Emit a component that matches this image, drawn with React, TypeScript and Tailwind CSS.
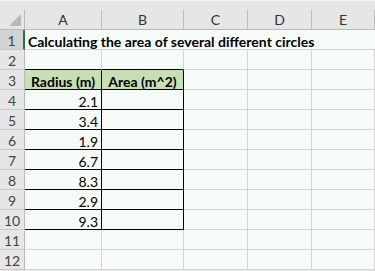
import React from 'react';

const COLS = ['A', 'B', 'C', 'D', 'E'];
const RADII = ['2.1', '3.4', '1.9', '6.7', '8.3', '2.9', '9.3'];

const grid = 'grid grid-cols-[25px_77px_82px_64px_64px_63px]';
const cellBase = 'h-[20px] border-r border-b text-[14px] leading-[19px] pt-[2px] whitespace-nowrap';

function RowHeader({ n, active }: { n: number; active?: boolean }) {
  return (
    <div
      className={`h-[20px] border-b border-b-[#c9c9c9] text-center text-[14px] leading-[20px] pt-px ${
        active
          ? 'bg-[#d2d2d2] text-[#2f4f2f] border-r-2 border-r-[#217346]'
          : 'bg-[#e6e6e6] text-[#444] border-r border-r-[#b9b9b9]'
      }`}
    >
      {n}
    </div>
  );
}

function Cell({
  children,
  black,
  blackBottom,
  fill,
  className = '',
}: {
  children?: React.ReactNode;
  black?: boolean;
  blackBottom?: boolean;
  fill?: boolean;
  className?: string;
}) {
  return (
    <div
      className={`${cellBase} ${black ? 'border-r-black' : 'border-r-[#d4d4d4]'} ${
        black || blackBottom ? 'border-b-black' : 'border-b-[#d4d4d4]'
      } ${fill ? 'bg-[#c6e0b4]' : 'bg-[#f6fbf7]'} ${className}`}
    >
      {children}
    </div>
  );
}

export default function App() {
  const rows: React.ReactNode[] = [];

  // row 1 - title
  rows.push(
    <div key={1} className={grid}>
      <RowHeader n={1} active />
      <div className="col-span-5 h-[20px] border-b border-b-[#d4d4d4] bg-[#f6fbf7] relative">
        <span className="absolute left-[3px] top-[2px] text-[14px] leading-[19px] font-bold text-black whitespace-nowrap">
          Calculating the area of several different circles
        </span>
      </div>
    </div>
  );

  // row 2 - empty, bottom of A/B black (top of table)
  rows.push(
    <div key={2} className={grid}>
      <RowHeader n={2} />
      <Cell blackBottom />
      <Cell blackBottom />
      <Cell />
      <Cell />
      <Cell />
    </div>
  );

  // row 3 - table headings
  rows.push(
    <div key={3} className={grid}>
      <RowHeader n={3} />
      <Cell black fill className="font-bold text-center">Radius (m)</Cell>
      <Cell black fill className="font-bold text-center">Area (m^2)</Cell>
      <Cell />
      <Cell />
      <Cell />
    </div>
  );

  RADII.forEach((r, i) => {
    rows.push(
      <div key={i + 4} className={grid}>
        <RowHeader n={i + 4} />
        <Cell black className="text-right pr-[3px]">{r}</Cell>
        <Cell black />
        <Cell />
        <Cell />
        <Cell />
      </div>
    );
  });

  [11, 12].forEach((n) =>
    rows.push(
      <div key={n} className={grid}>
        <RowHeader n={n} />
        <Cell />
        <Cell />
        <Cell />
        <Cell />
        <Cell />
      </div>
    )
  );

  return (
    <div
      className="w-[375px] h-[271px] overflow-hidden bg-[#e6e6e6] text-black"
      style={{ fontFamily: 'Lato, "Open Sans", sans-serif' }}
    >
      {/* strip above the column headers */}
      <div className="h-[10px] bg-[#e6e6e6] border-t border-t-[#f3f3f3]" />

      {/* column headers */}
      <div className={`${grid} h-[20px]`}>
        <div className="relative h-[20px] bg-[#e6e6e6] border-r border-r-[#b9b9b9] border-b border-b-[#b9b9b9]">
          <div className="absolute right-[3px] bottom-[3px] w-0 h-0 border-l-[12px] border-l-transparent border-b-[12px] border-b-[#b8b8b8]" />
        </div>
        {COLS.map((c) => (
          <div
            key={c}
            className="h-[20px] bg-[#e6e6e6] border-r border-r-[#bdbdbd] border-b border-b-[#b9b9b9] text-center text-[14px] leading-[20px] text-[#333]"
          >
            {c}
          </div>
        ))}
      </div>

      {rows}
    </div>
  );
}
